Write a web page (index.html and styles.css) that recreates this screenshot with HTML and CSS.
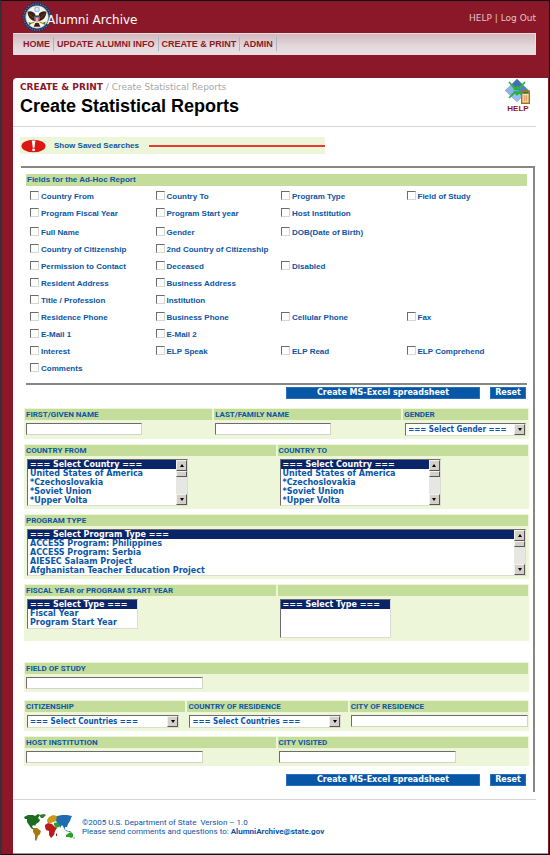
FILE: index.html
```html
<!DOCTYPE html>
<html lang="en">
<head>
<meta charset="utf-8">
<meta name="viewport" content="width=device-width, initial-scale=1">
<title>Alumni Archive - Create Statistical Reports</title>
<link rel="stylesheet" href="styles.css">
</head>
<body>
<div class="frame">
  <header class="top">
    <div class="brand-row">
      <div class="brand">
        <svg class="seal" viewBox="0 0 30 30" aria-hidden="true">
          <circle cx="15" cy="15" r="14.500" fill="#1d3566"/>
          <circle cx="15" cy="15" r="13.200" fill="none" stroke="#6f82a6" stroke-width="1.200" stroke-dasharray="1 1.500"/>
          <circle cx="15" cy="15" r="11.300" fill="#f6f4ec" stroke="#c9b989" stroke-width=".6"/>
          <circle cx="15" cy="7.400" r="2.800" fill="#9fc6e6"/>
          <circle cx="15" cy="7.400" r="1.300" fill="#e9f3fa"/>
          <path d="M13.600 12.500C11 8.800 7.600 8.600 5.600 9.800c.1 4.600 2.600 8 6.600 9.200l2.800 1 2.800-1c4-1.200 6.500-4.600 6.600-9.200-2-1.200-5.400-1-8 2.700z" fill="#3a2016"/>
          <path d="M7 11.500l4.500 4.500M23 11.500l-4.500 4.500" stroke="#8b6844" stroke-width=".6"/>
          <path d="M13.300 12c0-1.600 3-2 3.400-.4l.2 2h-3.600z" fill="#fff"/>
          <path d="M12.700 14h4.600v3.500c0 1.800-1.300 2.800-2.300 3.300-1-.5-2.300-1.500-2.300-3.300z" fill="#fff"/>
          <path d="M12.700 14h4.600v1.600h-4.600z" fill="#28478c"/>
          <path d="M13.500 15.600v3.500M15 15.600v5M16.500 15.600v3.500" stroke="#c22a34" stroke-width=".8"/>
          <path d="M13.300 21l-1.600 3.800h6.600L16.700 21z" fill="#3a2016"/>
          <path d="M12.500 20l-5 2M17.500 20l5 2" stroke="#b08a2c" stroke-width="1.300"/>
          <path d="M6.500 20l3 1-2 2.500zM23.500 19.500l-3 1.500 2.500 2z" fill="#4d7a3c"/>
        </svg>
        <span class="brand-name">Alumni Archive</span>
      </div>
      <div class="account"><a href="#">HELP</a> | <a href="#">Log Out</a></div>
    </div>
    <nav class="nav">
      <a href="#">HOME</a><a href="#">UPDATE ALUMNI INFO</a><a href="#">CREATE &amp; PRINT</a><a href="#">ADMIN</a>
    </nav>
  </header>

  <main class="page">
    <div class="heading">
      <div>
        <div class="crumbs"><a href="#">CREATE &amp; PRINT</a> / Create Statistical Reports</div>
        <h1>Create Statistical Reports</h1>
      </div>
      <a class="help" href="#">
        <svg class="help-icon" viewBox="0 0 26 26" aria-hidden="true">
          <path d="M12 1L24 12.500 12 24 0 12.500z" fill="#6d9bd2"/>
          <path d="M12 1l5 5-5 5-5-5z" fill="#3f6fb0"/>
          <path d="M5.500 7.500l5 5-5 5-5-5z" fill="#8db4e4"/>
          <path d="M12 13.500l5 5-5 5-5-5z" fill="#9bc0ec"/>
          <path d="M18.500 7.500l5 5-5 5-5-5z" fill="#5382bd"/>
          <path d="M4 4l6.500 7M20 4l-6.500 7M4 20l6.500-6.500M20 20l-6-6" stroke="#25b33b" stroke-width="1.700"/>
          <path d="M8 12h4V7.500zM16 12h-4V7.500zM8 13.500h4V18zM16 13.500h-4V18z" fill="#25b33b"/>
          <path d="M16.700 13.200h7.600v12h-7.600z" fill="#f6dfb4" stroke="#a8750c" stroke-width="1.400"/>
          <path d="M17.400 14h6.200v1.700h-6.200z" fill="#2f7d32"/>
          <path d="M18.500 18h4M18.500 20h4M18.500 22h4M19.500 17.500v6M21.500 17.500v6" stroke="#e09a66" stroke-width=".8"/>
        </svg>
        <span>HELP</span>
      </a>
    </div>

    <div class="saved">
      <svg class="alert" viewBox="0 0 26 14" aria-hidden="true">
        <ellipse cx="13" cy="7" rx="12.500" ry="6.600" fill="#dc1515"/>
        <path d="M11.200 1.200h3.800l-1 7.600h-1.800z" fill="#fff"/>
        <circle cx="13.100" cy="11" r="1.500" fill="#fff"/>
      </svg>
      <a href="#">Show Saved Searches</a>
      <span class="saved-line"></span>
    </div>

    <form class="panel">
      <fieldset class="fields">
        <legend>Fields for the Ad-Hoc Report</legend>
        <div class="checks">
          <label class="c1"><input type="checkbox">Country From</label>
          <label><input type="checkbox">Country To</label>
          <label><input type="checkbox">Program Type</label>
          <label><input type="checkbox">Field of Study</label>
          <label class="c1"><input type="checkbox">Program Fiscal Year</label>
          <label><input type="checkbox">Program Start year</label>
          <label><input type="checkbox">Host Institution</label>
        </div>
        <div class="checks">
          <label class="c1"><input type="checkbox">Full Name</label>
          <label><input type="checkbox">Gender</label>
          <label><input type="checkbox">DOB(Date of Birth)</label>
          <label class="c1"><input type="checkbox">Country of Citizenship</label>
          <label><input type="checkbox">2nd Country of Citizenship</label>
          <label class="c1"><input type="checkbox">Permission to Contact</label>
          <label><input type="checkbox">Deceased</label>
          <label><input type="checkbox">Disabled</label>
          <label class="c1"><input type="checkbox">Resident Address</label>
          <label><input type="checkbox">Business Address</label>
          <label class="c1"><input type="checkbox">Title / Profession</label>
          <label><input type="checkbox">Institution</label>
          <label class="c1"><input type="checkbox">Residence Phone</label>
          <label><input type="checkbox">Business Phone</label>
          <label><input type="checkbox">Cellular Phone</label>
          <label><input type="checkbox">Fax</label>
          <label class="c1"><input type="checkbox">E-Mail 1</label>
          <label><input type="checkbox">E-Mail 2</label>
          <label class="c1"><input type="checkbox">Interest</label>
          <label><input type="checkbox">ELP Speak</label>
          <label><input type="checkbox">ELP Read</label>
          <label><input type="checkbox">ELP Comprehend</label>
          <label class="c1"><input type="checkbox">Comments</label>
        </div>
      </fieldset>

      <div class="actions">
        <button class="create" type="submit">Create MS-Excel spreadsheet</button>
        <button class="reset" type="reset">Reset</button>
      </div>

      <div class="band names">
        <div class="cell"><label for="first">FIRST/GIVEN NAME</label><input class="short" type="text" id="first"></div>
        <div class="cell"><label for="last">LAST/FAMILY NAME</label><input class="short" type="text" id="last"></div>
        <div class="cell"><label for="gender">GENDER</label>
          <span class="drop fill"><select id="gender"><option>=== Select Gender ===</option></select><i class="arrow down"></i></span></div>
      </div>

      <div class="band halves">
        <div class="cell"><label for="from">COUNTRY FROM</label>
          <span class="list country"><select id="from" size="5"><option selected>=== Select Country ===</option><option>United States of America</option><option>*Czechoslovakia</option><option>*Soviet Union</option><option>*Upper Volta</option></select><span class="bar"><i class="arrow up"></i><i class="thumb"></i><i class="arrow down"></i></span></span></div>
        <div class="cell"><label for="to">COUNTRY TO</label>
          <span class="list country"><select id="to" size="5"><option selected>=== Select Country ===</option><option>United States of America</option><option>*Czechoslovakia</option><option>*Soviet Union</option><option>*Upper Volta</option></select><span class="bar"><i class="arrow up"></i><i class="thumb"></i><i class="arrow down"></i></span></span></div>
      </div>

      <div class="band">
        <div class="cell"><label for="program">PROGRAM TYPE</label>
          <span class="list fill"><select id="program" size="5"><option selected>=== Select Program Type ===</option><option>ACCESS Program: Philippines</option><option>ACCESS Program: Serbia</option><option>AIESEC Salaam Project</option><option>Afghanistan Teacher Education Project</option></select><span class="bar"><i class="arrow up"></i><i class="thumb"></i><i class="arrow down"></i></span></span></div>
      </div>

      <div class="band halves years">
        <div class="cell"><label for="year">FISCAL YEAR or PROGRAM START YEAR</label>
          <span class="list type three"><select id="year" size="3"><option selected>=== Select Type ===</option><option>Fiscal Year</option><option>Program Start Year</option></select></span></div>
        <div class="cell"><label for="year-value">&nbsp;</label>
          <span class="list type four"><select id="year-value" size="4"><option selected>=== Select Type ===</option></select></span></div>
      </div>

      <div class="band study">
        <div class="cell"><label for="study">FIELD OF STUDY</label><input class="long" type="text" id="study"></div>
      </div>

      <div class="band places">
        <div class="cell"><label for="citizen">CITIZENSHIP</label>
          <span class="drop countries"><select id="citizen"><option>=== Select Countries ===</option></select><i class="arrow down"></i></span></div>
        <div class="cell"><label for="residence">COUNTRY OF RESIDENCE</label>
          <span class="drop countries"><select id="residence"><option>=== Select Countries ===</option></select><i class="arrow down"></i></span></div>
        <div class="cell"><label for="city">CITY OF RESIDENCE</label><input class="long" type="text" id="city"></div>
      </div>

      <div class="band halves">
        <div class="cell"><label for="host">HOST INSTITUTION</label><input class="long" type="text" id="host"></div>
        <div class="cell"><label for="visited">CITY VISITED</label><input class="long" type="text" id="visited"></div>
      </div>

      <div class="actions last">
        <button class="create" type="submit">Create MS-Excel spreadsheet</button>
        <button class="reset" type="reset">Reset</button>
      </div>
    </form>

    <footer class="foot">
      <svg class="map" viewBox="0 0 52 28" aria-hidden="true">
        <path d="M0 3l4-2 5 0 2 1 3-2 2 1-2 3 2 2-1 2-3 2-1 2-1-1-2 1 1 2 2 1-1 1-3-2-2-3-2-3 0-3-2 0z" fill="#1f6b1f"/>
        <path d="M15 1l5-1 2 1-3 3-2 0z" fill="#2b7a2b"/>
        <path d="M9 14l4 0 4 3-1 3-2 2-1 3-1 2-1-1 0-5-2-3z" fill="#a8780f"/>
        <path d="M23 6l2-3 4-2 4 1 0 5-4 1-2 1-3 0-1-2z" fill="#c99a17"/>
        <path d="M21 11l3-2 4 1 3 3 2 1-2 3-1 4-3 3-2-3 0-4-3-1-1-3z" fill="#bd1a1c"/>
        <path d="M32 20l1-1 0 3-1 0z" fill="#bd1a1c"/>
        <path d="M30 9l4-1 3 2-2 3-3 1-2-3z" fill="#2aa02f"/>
        <path d="M33 2l5-1 5 0 5 1-1 2-1 3-2 3-1 3-2 0 0 3-1-2-2-3-2 3-1-4-3-3z" fill="#1e6cb2"/>
        <path d="M41 14l1 2 2 1 3 0-1 1-4-1z" fill="#1e6cb2"/>
        <path d="M42 21l3-2 2-1 2 2 0 3-2 1-2-1-3 0z" fill="#2aa02f"/>
        <path d="M50 23l1 1-2 1z" fill="#2aa02f"/>
      </svg>
      <p>©2005 U.S. Department of State&nbsp; Version – 1.0<br>Please send comments and questions to: <a href="#">AlumniArchive@state.gov</a></p>
    </footer>
  </main>
</div>
</body>
</html>
```
FILE: styles.css
```css
* { box-sizing: border-box; }

body {
  margin: 0;
  background: #8b1828;
  color: #0a55a5;
  font: 8px/10px "Liberation Sans", Arial, sans-serif;
}

a { color: inherit; text-decoration: none; }

.frame {
  min-height: 100vh;
  display: flex;
  flex-direction: column;
  border: 1px solid #111;
  border-left: 2px solid #3a3034;
  border-right: 1px solid #1c0508;
}

/* Header */
.top { padding: 0 13px 23px 11px; }

.brand-row {
  display: flex;
  justify-content: space-between;
  height: 32px;
}

.brand { display: flex; padding-left: 9px; }

.seal { width: 30px; height: 30px; margin-top: 1px; }

.brand-name {
  margin: 11px 0 0 -5px;
  z-index: 1;
  color: #fff;
  font: 12px/16px "DejaVu Sans", Verdana, sans-serif;
}

.account {
  padding-top: 11px;
  color: #e2c5ca;
  font: 9px/12px "DejaVu Sans", Verdana, sans-serif;
}

.nav {
  display: flex;
  align-items: center;
  height: 22px;
  padding-left: 7px;
  border: 1px solid #e8dde0;
  border-width: 1px 1px 1px 0;
  background: linear-gradient(#d2b9be, #e4d8da 60%, #e8dfe1);
  color: #8b1828;
  font: bold 9px/14px "Liberation Sans", Arial, sans-serif;
}

.nav a { padding: 0 3px; border-right: 1px solid #a9b6c2; }

/* Page */
.page {
  flex: 1;
  margin: 0 1px 0 11px;
  background: #fff;
  border-top-left-radius: 4px;
  border-bottom: 1px solid #999;
}

.heading {
  display: flex;
  justify-content: space-between;
  height: 49px;
  margin-right: 12px;
  padding: 3px 5px 0 7px;
  border-bottom: 1px solid #d6d6d6;
}

.crumbs {
  color: #a6a6a6;
  font: 9px/12px "DejaVu Sans", Verdana, sans-serif;
}

.crumbs a { color: #8b1828; font-weight: bold; }

h1 {
  margin: 2px 0 0;
  color: #000;
  font: bold 18px/22px "Liberation Sans", Arial, sans-serif;
}

.help {
  display: flex;
  flex-direction: column;
  align-items: center;
  margin-top: -3px;
  color: #8b1828;
  font-weight: bold;
}

.help-icon { width: 26px; height: 26px; }

.saved {
  display: flex;
  align-items: center;
  width: 57%;
  height: 17px;
  margin: 10px 0 0 7px;
  padding-left: 1px;
  background: #edf6d8;
  font-weight: bold;
}

.alert { width: 25px; height: 14px; margin-right: 8px; }

.saved-line {
  flex: 1;
  height: 2px;
  margin-left: 10px;
  background: #e53b32;
}

.panel {
  margin: 12px 13px 0 8px;
  padding: 6px 4px 6px 4px;
  border: solid #858781;
  border-width: 2px 2px 0 0;
}

.fields {
  margin: 0 2px 0 1px;
  padding: 0 0 6px;
  border: 0;
  border-bottom: 2px solid #858781;
}

.fields legend {
  width: 100%;
  padding: 1px;
  background: #c5dd9a;
  font-weight: bold;
}

.checks {
  display: grid;
  grid-template-columns: repeat(3, 25%) 1fr;
  grid-auto-rows: 17px;
  margin: 2px -5px 0 4px;
}

.checks label {
  display: flex;
  align-items: center;
  gap: 2px;
  font-weight: bold;
  white-space: nowrap;
}

.checks .c1 { grid-column: 1; }

.checks input {
  appearance: none;
  width: 9px;
  height: 9px;
  margin: 0 0 2px;
  border: 1px solid #d8d6d0;
  border-top-color: #6c6c6c;
  border-left-color: #6c6c6c;
  background: #fff;
}

.checks input:checked { background: #0a55a5; }

.actions {
  display: flex;
  justify-content: flex-end;
  gap: 10px;
  padding: 2px 3px 9px;
}

.actions button {
  height: 12px;
  padding: 0;
  border: 1px solid #2a6fc0;
  background: #0657a6;
  color: #fff;
  font: bold 8px/10px "DejaVu Sans", Verdana, sans-serif;
}

.create { width: 194px; }
.reset { width: 36px; }

/* Search bands */
.band {
  display: grid;
  gap: 2px;
  margin: 0 0 5px -1px;
  padding: 1px 1px 3px;
  background: #edf6d8;
}

.names { grid-template-columns: 3fr 3fr 2fr; }
.halves { grid-template-columns: 1fr 1fr; }
.places { grid-template-columns: 9fr 9fr 10fr; }
.years { margin-bottom: 21px; }
.study { margin-bottom: 8px; }

.cell {
  display: flex;
  flex-direction: column;
  align-items: flex-start;
  min-width: 0;
}

.cell label {
  width: 100%;
  height: 11px;
  margin-bottom: 3px;
  padding-left: 1px;
  background: #c5dd9a;
  font: bold 8px/11px Roboto, Arial, sans-serif;
}

.cell input {
  height: 12px;
  margin-left: 1px;
  padding: 0 2px;
  border: 1px solid #d4d4cc;
  border-top-color: #6c6c6c;
  border-left-color: #6c6c6c;
  background: #fff;
  color: inherit;
  font: bold 8px/9px "DejaVu Sans", Verdana, sans-serif;
}

.short { width: 116px; }
.long { width: 177px; max-width: 100%; }

.list,
.drop {
  display: flex;
  margin-left: 2px;
  border: 1px solid #dcdcd4;
  border-top-color: #6c6c6c;
  border-left-color: #6c6c6c;
  background: #fff;
}

.list { height: 47px; }
.drop { height: 13px; }
.fill { align-self: stretch; margin-right: 2px; }
.country { width: 161px; }
.type { width: 111px; }
.three { height: 30px; }
.four { height: 39px; }
.countries { width: 152px; }

select {
  appearance: none;
  flex: 1;
  min-width: 0;
  margin: 0;
  padding: 0;
  border: 0;
  border-radius: 0;
  outline: 0;
  background: #fff;
  color: #0a55a5;
  font: bold 8px/9px "DejaVu Sans", Verdana, sans-serif;
  overflow: hidden;
  scrollbar-width: none;
}

.drop select {
  padding-left: 2px;
  font-family: "DejaVu Sans Condensed", Verdana, sans-serif;
  line-height: 11px;
}

.list option {
  height: 9px;
  min-height: 9px;
  padding: 0 2px;
  font-weight: bold;
  line-height: 9px;
}

.list option:checked {
  background: linear-gradient(#0a246a, #0a246a);
  -webkit-text-fill-color: #fff;
}

.bar {
  display: flex;
  flex-direction: column;
  width: 11px;
  background: #e6e6e2;
}

.arrow,
.thumb {
  width: 11px;
  height: 11px;
  border: 1px solid #f4f2ee;
  border-right-color: #555;
  border-bottom-color: #555;
  background: #d4d0c8;
}

.thumb { height: 6px; }

.arrow {
  display: flex;
  align-items: center;
  justify-content: center;
}

.arrow::before {
  content: "";
  border: 2px solid transparent;
}

.up::before { border-top: 0; border-bottom: 3px solid #000; }
.down::before { border-bottom: 0; border-top: 3px solid #000; }
.bar .down { margin-top: auto; }

.last { padding: 3px 3px 0; }

/* Footer */
.foot {
  display: flex;
  gap: 6px;
  margin: 7px 12px 0 0;
  padding: 14px 0 8px 11px;
  border-top: 1px solid #d6d6d6;
}

.map { width: 52px; height: 28px; }

.foot p { margin: 4px 0 0; font-family: Roboto, Arial, sans-serif; line-height: 9px; }
.foot p a { font-weight: bold; }
```
